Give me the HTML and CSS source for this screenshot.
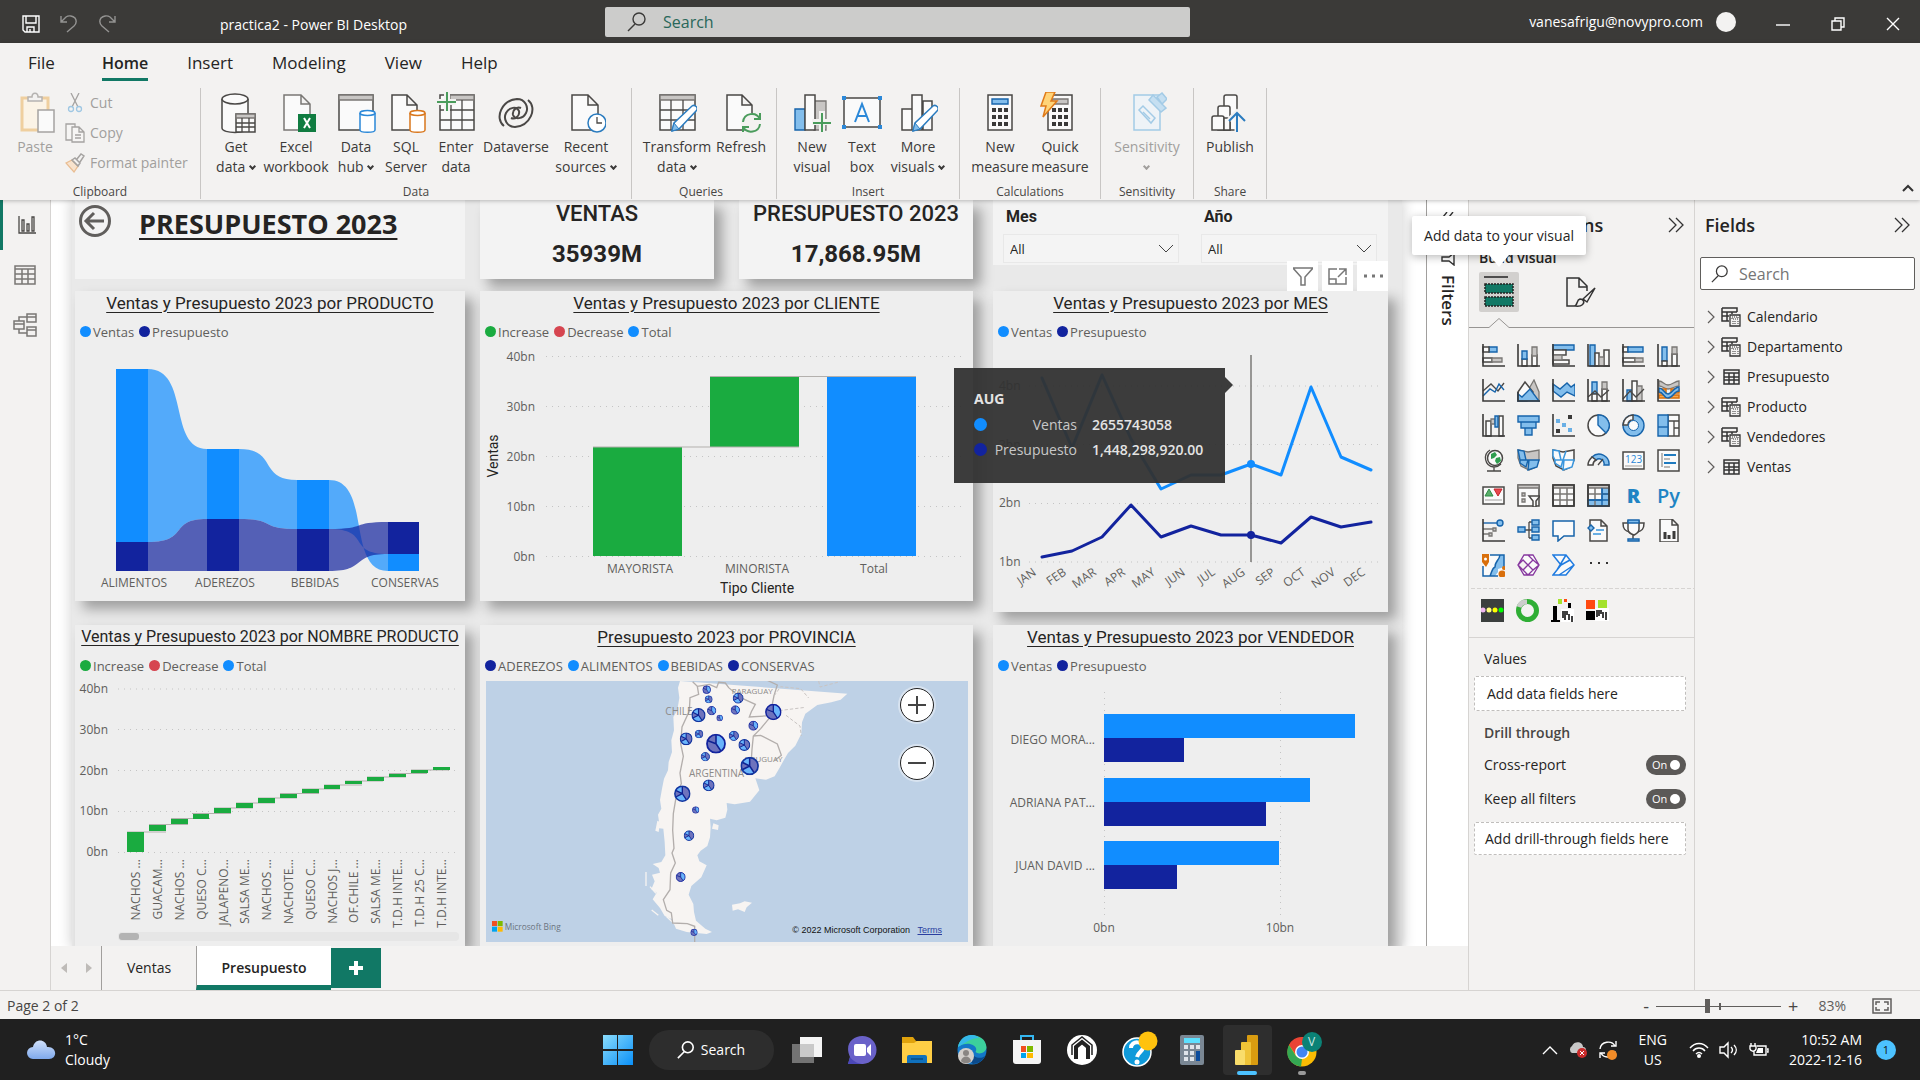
FILE: index.html
```html
<!DOCTYPE html>
<html lang="en">
<head>
    <meta charset="UTF-8">
    <meta name="viewport" content="width=device-width, initial-scale=1.0">
    <title>practica2 - Power BI Desktop</title>
    <link rel="stylesheet" href="styles.css">
</head>
<body>
    <header class="titlebar">
        <div class="quick">
            <button aria-label="Save"><svg width="18" height="18" viewBox="0 0 18 18"><path class="wl" d="M1 1h16v16H3l-2-2zM4 1v7h10V1M5 17v-5h7v5M8 14v3"/></svg></button>
            <button class="dim" aria-label="Undo"><svg width="18" height="18" viewBox="0 0 18 18"><path class="wl" d="M1 1v6h6M1 7l5-5c3-2 7-1 9 1 2 3 1 6-1 8l-7 6"/></svg></button>
            <button class="dim" aria-label="Redo"><svg width="18" height="18" viewBox="0 0 18 18"><path class="wl" d="M17 1v6h-6M17 7l-5-5C9 0 5 1 3 3c-2 3-1 6 1 8l7 6"/></svg></button>
        </div>
        <div class="doc-name">practica2 - Power BI Desktop</div>
        <label class="top-search">
            <svg width="20" height="20" viewBox="0 0 20 20"><circle cx="12" cy="7" r="6"/><path d="M8 12l-7 7"/></svg>
            <input type="text" placeholder="Search" aria-label="Search">
        </label>
        <div class="account">
            <span>vanesafrigu@novypro.com</span>
            <i class="avatar"></i>
        </div>
        <div class="window-buttons">
            <button aria-label="Minimize"><svg width="14" height="14" viewBox="0 0 14 14"><path class="wl" d="M0 8h14"/></svg></button>
            <button aria-label="Restore"><svg width="14" height="14" viewBox="0 0 14 14"><path class="wl" d="M1 4h9v9H1zM4 4V1h9v9h-3"/></svg></button>
            <button aria-label="Close"><svg width="14" height="14" viewBox="0 0 14 14"><path class="wl" d="M1 1l12 12M13 1L1 13"/></svg></button>
        </div>
    </header>

    <section class="ribbon">
        <nav class="menu">
            <a href="#">File</a>
            <a href="#" class="active">Home</a>
            <a href="#">Insert</a>
            <a href="#">Modeling</a>
            <a href="#">View</a>
            <a href="#">Help</a>
        </nav>
        <div class="groups">
            <div class="group clipboard">
                <div class="tools">
                    <button class="tool m" disabled>
                        <svg width="40" height="42" viewBox="0 0 40 42"><path d="M7 6h26v32H7z" fill="#fbf3e6" stroke="#efcf9f" stroke-width="3"/><path d="M13 9V5h4c0-5 6-5 6 0h4v4z" fill="#f3f2f1" stroke="#b5b3b1" stroke-width="1.5"/><path d="M23 18h16v22H23z" fill="#fafafa" stroke="#a5a3a1" stroke-width="1.5"/></svg>
                        <span>Paste</span>
                    </button>
                    <div class="small-tools">
                        <button disabled><svg width="20" height="20" viewBox="0 0 20 20"><g fill="none" stroke="#a5a3a1" stroke-width="1.3"><path d="M6 0l7 14M14 0L7 14"/><circle cx="6" cy="16" r="2.5" stroke="#9fc7e3"/><circle cx="14" cy="16" r="2.5" stroke="#9fc7e3"/></g></svg>Cut</button>
                        <button disabled><svg width="20" height="20" viewBox="0 0 20 20"><g fill="#f6f5f4" stroke="#a5a3a1" stroke-width="1.3"><path d="M1 1h9v16H1z"/><path d="M7 4h7l5 5v10H7zM14 4v5h5M10 12h6M10 15h6"/></g></svg>Copy</button>
                        <button disabled><svg width="20" height="20" viewBox="0 0 20 20"><path d="M1 10l6-3 6 6-4 6z" fill="#f8e3cd" stroke="#e9bd92" stroke-width="1.3"/><path d="M7 7l3-2 5 5-2 3zM12 6l4-5 3 2-4 6" fill="none" stroke="#a5a3a1" stroke-width="1.5"/></svg>Format painter</button>
                    </div>
                </div>
                <div class="group-name">Clipboard</div>
            </div>
            <div class="group">
                <div class="tools">
                    <button class="tool m"><svg width="40" height="42" viewBox="0 0 40 42"><path class="k" d="M6 7v29c0 6 26 6 26 0V7"/><ellipse class="k" cx="19" cy="7" rx="13" ry="5"/><path class="k" d="M20 22h19v18H20z"/><path class="g" d="M20 22h19v4H20z"/><path class="kl" d="M20 31h19M20 35h19M26 26v14M33 26v14"/></svg><span>Get<br>data <b class="chev"></b></span></button>
                    <button class="tool m"><svg width="40" height="42" viewBox="0 0 40 42"><path class="g2" d="M8 3h17l9 9v26H8zM25 3v9h9"/><path d="M22 22h18v18H22z" fill="#107c41"/><path d="M28 26l6 10M34 26l-6 10" stroke="#fff" stroke-width="2"/></svg><span>Excel<br>workbook</span></button>
                    <button class="tool m"><svg width="40" height="42" viewBox="0 0 40 42"><path class="k" d="M3 3h34v35H3z"/><path class="g" d="M3 3h34v5H3z"/><path class="cyl blue" d="M24 21v17c0 3 15 3 15 0V21"/><ellipse class="cyl blue" cx="31.5" cy="21" rx="7.5" ry="2.5"/></svg><span>Data<br>hub <b class="chev"></b></span></button>
                    <button class="tool s"><svg width="40" height="42" viewBox="0 0 40 42"><path class="k" d="M6 3h15l10 10v25H6zM21 3v10h10"/><path class="cyl orange" d="M24 21v17c0 3 15 3 15 0V21"/><ellipse class="cyl orange" cx="31.5" cy="21" rx="7.5" ry="2.5"/></svg><span>SQL<br>Server</span></button>
                    <button class="tool m"><svg width="40" height="42" viewBox="0 0 40 42"><path class="k" d="M4 3h34v35H4z"/><path class="g" d="M14 3h24v5H14z"/><path class="kl" d="M4 18h34M4 28h34M15 8v30M26 8v30"/><path d="M11 0v19M1 10h19" stroke="#f3f2f1" stroke-width="6"/><path d="M11 0v19M1 10h19" stroke="#4a9c5c" stroke-width="2"/></svg><span>Enter<br>data</span></button>
                    <button class="tool m"><svg width="40" height="42" viewBox="0 0 40 42"><g fill="none" stroke="#4a4846" stroke-width="2"><path d="M8 34C-2 26 6 8 21 7c8 0 12 8 9 14s-11 7-13 2c-1-5 4-9 8-7"/><path d="M32 8c10 8 2 26-13 27-8 0-12-8-9-14s11-7 13-2c1 5-4 9-8 7"/></g></svg><span>Dataverse</span></button>
                    <button class="tool l"><svg width="40" height="42" viewBox="0 0 40 42"><path class="k" d="M6 3h16l10 10v25H6zM22 3v10h10"/><circle cx="31" cy="31" r="9" fill="#fff" stroke="#2b7cbf" stroke-width="1.5"/><path class="kl" d="M31 25v6h5"/></svg><span>Recent<br>sources <b class="chev"></b></span></button>
                </div>
                <div class="group-name">Data</div>
            </div>
            <div class="group queries">
                <div class="tools">
                    <button class="tool l"><svg width="40" height="42" viewBox="0 0 40 42"><path class="k" d="M3 3h35v35H3z"/><path class="g" d="M3 3h35v5H3z"/><path class="kl" d="M3 18h35M3 28h35M14 8v30M26 8v30"/><path class="pen" d="M15 39l2-8 18-17c3-2 7 2 4 5L22 37z"/><path d="M15 39l2-8 5 6z" fill="#83beec" stroke="#2b7cbf"/></svg><span>Transform<br>data <b class="chev"></b></span></button>
                    <button class="tool sm"><svg width="40" height="42" viewBox="0 0 40 42"><path class="k" d="M6 3h15l10 10v25H6zM21 3v10h10"/><circle cx="30" cy="31" r="10" fill="#f3f2f1"/><path d="M22 30c1-9 13-11 17-3M39 21v6h-6M39 32c-1 9-13 10-17 3M22 40v-5h6" fill="none" stroke="#4a9c5c" stroke-width="2"/></svg><span>Refresh</span></button>
                </div>
                <div class="group-name">Queries</div>
            </div>
            <div class="group">
                <div class="tools">
                    <button class="tool m"><svg width="40" height="42" viewBox="0 0 40 42"><path class="g" d="M22 9h12v29H22z"/><path class="b" d="M3 17h10v21H3z"/><path class="k" d="M13 3h10v35H13z"/><path d="M30 19v21M20 30h19" stroke="#f3f2f1" stroke-width="6"/><path d="M30 21v19M21 31h18" stroke="#4a9c5c" stroke-width="2"/></svg><span>New<br>visual</span></button>
                    <button class="tool s"><svg width="40" height="42" viewBox="0 0 40 42"><path class="k" d="M2 6h36v29H2z"/><path d="M0 4h4v4H0zM36 4h4v4h-4zM0 33h4v4H0zM36 33h4v4h-4z" fill="#2b88d8"/><path d="M13 30l7-18 7 18M15 24h10" fill="none" stroke="#2b88d8" stroke-width="2"/></svg><span>Text<br>box</span></button>
                    <button class="tool ml"><svg width="40" height="42" viewBox="0 0 40 42"><path class="k" d="M25 9h9v29h-9zM4 17h10v21H4zM14 3h10v35H14z"/><path class="pen" d="M15 39l2-8 18-17c3-2 7 2 4 5L22 37z"/><path d="M15 39l2-8 5 6z" fill="#83beec" stroke="#2b7cbf"/></svg><span>More<br>visuals <b class="chev"></b></span></button>
                </div>
                <div class="group-name">Insert</div>
            </div>
            <div class="group calc">
                <div class="tools">
                    <button class="tool m"><svg width="40" height="42" viewBox="0 0 40 42"><path class="k" d="M8 3h24v35H8z"/><path class="b" d="M12 7h16v5H12z"/><path d="M14 16v18M20 16v18M26 16v18" stroke="#3b3a39" stroke-width="4" stroke-dasharray="4 3"/></svg><span>New<br>measure</span></button>
                    <button class="tool m"><svg width="40" height="42" viewBox="0 0 40 42"><path class="k" d="M8 3h24v35H8z"/><path class="g" d="M12 7h16v5H12z"/><path d="M14 16v18M20 16v18M26 16v18" stroke="#3b3a39" stroke-width="4" stroke-dasharray="4 3"/><path d="M6 0h9l-4 9h6L3 25l3-11H1z" fill="#ffd479" stroke="#e07b1a" stroke-width="1.5"/></svg><span>Quick<br>measure</span></button>
                </div>
                <div class="group-name">Calculations</div>
            </div>
            <div class="group wide">
                <div class="tools">
                    <button class="tool l" disabled><svg width="40" height="42" viewBox="0 0 40 42"><g fill="#eef3f7" stroke="#a3cbe6" stroke-width="1.5"><path d="M7 3h26v35H7z"/><path d="M12 18l4-4 12 12-4 5z"/><path d="M16 20l7 7"/><path d="M22 8l4-5 13 13-5 4zM30 5l5-4 5 6-5 5z" fill="#c5dff1"/></g></svg><span>Sensitivity<br><b class="chev"></b></span></button>
                </div>
                <div class="group-name">Sensitivity</div>
            </div>
            <div class="group wide">
                <div class="tools">
                    <button class="tool m"><svg width="40" height="42" viewBox="0 0 40 42"><path class="k" d="M14 38V5q0-2 2-2h9q2 0 2 2v33z"/><path class="k" d="M8 38V16q0-2 2-2h8q2 0 2 2v22z"/><path class="k" d="M2 38V26q0-2 2-2h8q2 0 2 2v12z"/><path class="k" d="M14 26h6v12h-6z"/><path d="M27 19v21M19 28l8-8 8 8" stroke="#f3f2f1" stroke-width="5" fill="none"/><path d="M27 21v19M19 29l8-8 8 8" stroke="#2b7cbf" stroke-width="2" fill="none"/></svg><span>Publish</span></button>
                </div>
                <div class="group-name">Share</div>
            </div>
        </div>
        <button class="collapse" aria-label="Collapse ribbon"><svg width="12" height="8" viewBox="0 0 12 8"><path d="M1 7l5-5 5 5" fill="none" stroke="#333" stroke-width="2"/></svg></button>
    </section>

    <main class="workspace">
        <nav class="views">
            <button class="selected" aria-label="Report view"><svg width="18" height="18" viewBox="0 0 18 18"><path class="kl" d="M1 0v17h17M4 4h2v11H4zM9 8h2v7H9zM14 1h2v14h-2z"/></svg></button>
            <button aria-label="Data view"><svg width="22" height="20" viewBox="0 0 22 20"><path class="gl" d="M1 1h20v18H1zM1 4h20M1 9h20M1 14h20M8 4v15M14 4v15"/></svg></button>
            <button aria-label="Model view"><svg width="24" height="24" viewBox="0 0 24 24"><path class="gl" d="M1 8h10v8H1zM1 11h10M14 1h9v8h-9zM14 4h9M14 14h9v9h-9zM14 17h9M6 8V4h8M6 16v4h8"/></svg></button>
        </nav>

        <div class="center">
            <div class="canvas">
                <div class="sheet">
                    <div class="col col-left">
                        <article class="card heading">
                            <button class="back" aria-label="Back"><svg width="32" height="32" viewBox="0 0 32 32"><circle cx="16" cy="16" r="14.5"/><path d="M25 16H7M15 8l-8 8 8 8"/></svg></button>
                            <h1>PRESUPUESTO 2023</h1>
                        </article>
                        <article class="card">
                            <h2>Ventas y Presupuesto 2023 por PRODUCTO</h2>
                            <ul class="legend"><li class="ventas">Ventas</li><li class="presu">Presupuesto</li></ul>
                            <svg class="chart" viewBox="75 342 390 259">
                                <g fill="#118dff" fill-opacity=".7">
                                    <path d="M148 369C190 369 168 449 207 449V519C168 519 190 542 148 542z"/>
                                    <path d="M239 449C278 449 258 480 297 480V529C258 529 278 519 239 519z"/>
                                    <path d="M329 480C372 480 346 571 388 571V554C346 554 372 529 329 529z"/>
                                </g>
                                <g fill="#12239e" fill-opacity=".7">
                                    <path d="M148 542C190 542 168 519 207 519V571H148z"/>
                                    <path d="M239 519C278 519 258 529 297 529V571H239z"/>
                                    <path d="M329 529C368 529 350 522 388 522V554C350 554 368 571 329 571z"/>
                                </g>
                                <g fill="#118dff">
                                    <path d="M116 369h32v173h-32zM207 449h32v70h-32zM297 480h32v49h-32zM388 554h31v17h-31z"/>
                                </g>
                                <g fill="#12239e">
                                    <path d="M116 542h32v29h-32zM207 519h32v52h-32zM297 529h32v42h-32zM388 522h31v32h-31z"/>
                                </g>
                                <g class="mid">
                                    <text x="134" y="587">ALIMENTOS</text>
                                    <text x="225" y="587">ADEREZOS</text>
                                    <text x="315" y="587">BEBIDAS</text>
                                    <text x="405" y="587">CONSERVAS</text>
                                </g>
                            </svg>
                        </article>
                        <article class="card">
                            <h2 class="long">Ventas y Presupuesto 2023 por NOMBRE PRODUCTO</h2>
                            <ul class="legend"><li class="up">Increase</li><li class="down">Decrease</li><li class="ventas">Total</li></ul>
                            <svg class="chart" viewBox="75 676 390 270">
                                <path class="dots" d="M118 689H458M118 729.5H458M118 770.5H458M118 811.5H458M118 852.5H458"/>
                                <g class="end">
                                    <text x="108" y="693">40bn</text>
                                    <text x="108" y="734">30bn</text>
                                    <text x="108" y="775">20bn</text>
                                    <text x="108" y="815">10bn</text>
                                    <text x="108" y="856">0bn</text>
                                </g>
                                <path class="link" d="M127 832h39M149 824.5h39M171 818.5h39M192 813.5h39M214 808h39M236 803h39M258 798h39M280 793.5h39M302 789h38M324 785h38M345 781h38M367 777h39M389 773.5h38M411 770h38"/>
                                <path fill="#1aab40" d="M127 832h17v20h-17zM149 825h17v6h-17zM171 819h17v5h-17zM193 814h16v5h-16zM214 808h17v5h-17zM236 803h17v5h-17zM258 798h17v5h-17zM280 794h17v4h-17zM302 789h17v4h-17zM324 785h16v4h-16zM345 781h17v3h-17zM367 777h17v4h-17zM389 774h17v3h-17zM411 770h17v3h-17zM433 767h17v3h-17z"/>
                                <g class="end">
                                    <text transform="translate(140 859) rotate(-90)">NACHOS ...</text>
                                    <text transform="translate(162 859) rotate(-90)">GUACAM...</text>
                                    <text transform="translate(184 859) rotate(-90)">NACHOS ...</text>
                                    <text transform="translate(206 859) rotate(-90)">QUESO C...</text>
                                    <text transform="translate(228 859) rotate(-90)">JALAPENO...</text>
                                    <text transform="translate(249 859) rotate(-90)">SALSA ME...</text>
                                    <text transform="translate(271 859) rotate(-90)">NACHOS ...</text>
                                    <text transform="translate(293 859) rotate(-90)">NACHOTE...</text>
                                    <text transform="translate(315 859) rotate(-90)">QUESO C...</text>
                                    <text transform="translate(337 859) rotate(-90)">NACHOS J...</text>
                                    <text transform="translate(358 859) rotate(-90)">OF.CHILE ...</text>
                                    <text transform="translate(380 859) rotate(-90)">SALSA ME...</text>
                                    <text transform="translate(402 859) rotate(-90)">T.D.H INTE...</text>
                                    <text transform="translate(424 859) rotate(-90)">T.D.H 25 C...</text>
                                    <text transform="translate(446 859) rotate(-90)">T.D.H INTE...</text>
                                </g>
                                <rect x="118" y="932" width="341" height="9" rx="4" fill="#e6e6e6"/>
                                <rect x="119" y="933" width="20" height="7" rx="3" fill="#b3b3b3"/>
                            </svg>
                        </article>
                    </div>

                    <div class="col col-mid">
                        <div class="kpis">
                            <article class="card kpi"><h3>VENTAS</h3><p>35939M</p></article>
                            <article class="card kpi"><h3>PRESUPUESTO 2023</h3><p>17,868.95M</p></article>
                        </div>
                        <article class="card">
                            <h2>Ventas y Presupuesto 2023 por CLIENTE</h2>
                            <ul class="legend"><li class="up">Increase</li><li class="down">Decrease</li><li class="ventas">Total</li></ul>
                            <svg class="chart" viewBox="480 342 493 259">
                                <path class="dots" d="M546 356.5H965M546 406.5H965M546 456.5H965M546 506.5H965M546 556.5H965"/>
                                <g class="end">
                                    <text x="535" y="361">40bn</text>
                                    <text x="535" y="411">30bn</text>
                                    <text x="535" y="461">20bn</text>
                                    <text x="535" y="511">10bn</text>
                                    <text x="535" y="561">0bn</text>
                                </g>
                                <path fill="#1aab40" d="M593 447h89v109h-89zM710 377h89v70h-89z"/>
                                <path fill="#118dff" d="M827 377h89v179h-89z"/>
                                <path class="link" d="M593 447h206M710 376.5h206"/>
                                <g class="mid">
                                    <text x="640" y="573">MAYORISTA</text>
                                    <text x="757" y="573">MINORISTA</text>
                                    <text x="874" y="573">Total</text>
                                    <text class="axis" x="757" y="593">Tipo Cliente</text>
                                    <text class="axis" transform="translate(498 456) rotate(-90)">Ventas</text>
                                </g>
                            </svg>
                        </article>
                        <article class="card">
                            <h2>Presupuesto 2023 por PROVINCIA</h2>
                            <ul class="legend"><li class="presu">ADEREZOS</li><li class="ventas">ALIMENTOS</li><li class="ventas">BEBIDAS</li><li class="presu">CONSERVAS</li></ul>
                            <div class="map">
                                <svg viewBox="48 213 1446 783">
                                    <defs>
                                        <symbol id="pie" viewBox="-10 -10 20 20">
                                            <circle r="9" fill="#69b4fb"/>
                                            <path d="M0 0V-9A9 9 0 0 1 5 7.5zM0 0L-8 4A9 9 0 0 1 -8 -4z" fill="#6e73bd"/>
                                            <path d="M0 -9V0L5 7.5M0 0L-8 4M0 0L-8 -4" fill="none" stroke="#0f2392" stroke-width="1.6"/>
                                            <circle r="9" fill="none" stroke="#12349f" stroke-width="1.8"/>
                                        </symbol>
                                        <symbol id="pie-dark" viewBox="-10 -10 20 20">
                                            <circle r="9" fill="#6e73bd"/>
                                            <path d="M0 0V-9A9 9 0 0 1 5 7.5z" fill="#69b4fb"/>
                                            <path d="M0 -9V0L5 7.5M0 0L-8 -3" fill="none" stroke="#0f2392" stroke-width="1.6"/>
                                            <circle r="9" fill="none" stroke="#12239e" stroke-width="1.8"/>
                                        </symbol>
                                    </defs>
                                    <path fill="#bed1e6" d="M48 213h1446v783H48z"/>
                                    <g fill="#f7f4f2">
                                        <path d="M630 213l-6 20 4 30-6 38-12 20 2 40-8 30 2 35-10 30-2 25-12 25-6 30-6 34 4 26-10 18 4 28-6 12 18 2 4 40 2 40-12 20-26 6 18 12 4 14-24 6 8 20-10 24 16 10-12 20 22 26 14 24 22 10 12 28 32 10 60 6 16-6-20-10-28-24-6-26-2-24-14-28 8-26 30-26 16-36-22-12-6-18 10-14 20-14 8-26 2-30-2-26 20 5 26-8 6-24-2-20 24 4 46-8 28-34-8-24-4-12 32 4 26-10 14-24 12-22 14-24 22-22 18-36 2-34 10-26 36-26 42-8 28-8 20-18z"/>
                                        <path d="M730 640l16 6-2 14-18-4zM562 632l8 4-4 30-10-4zM786 884l24-4 14-6 22 4-16 14-6 14-20-8-16 4z"/>
                                        <path d="M528 786v42M540 830l18 20M545 900l20 16M590 920l24 22" stroke="#f7f4f2" stroke-width="4"/>
                                    </g>
                                    <g fill="none" stroke="#b3aeac" stroke-width="4">
                                        <path d="M668 215l14 14 4 24-26 10-2 40-22 48-4 50 8 38-10 50 4 32-14 30-10 60-2 50 4 54-6 14 10 30-14 30-2 50-20 30 10 32 14 8 4 30 44 2 22 8v70l24 12"/>
                                        <path d="M682 229l36-6 22 10 6-16 20 2 10 14 36 30 44 20-12 22-6 16 62-4 12-60 10-32-30-14-42-2"/>
                                        <path d="M900 322l-28 34-22 22-4 40-2 30 18 20M850 378l22-2 50 26 12 34-18 14"/>
                                    </g>
                                    <path d="M912 258l20-28 60 6 24 28M912 304l30-4 64-8M948 316l42 32 4 30M1046 213l4 18 60-16" fill="none" stroke="#c9c4c2" stroke-width="3" stroke-dasharray="10 6"/>
                                    <g class="country">
                                        <text x="785" y="251" font-size="24">PARAGUAY</text>
                                        <text x="586" y="315" font-size="30">CHILE</text>
                                        <text x="824" y="455" font-size="24">URUGUAY</text>
                                        <text x="657" y="502" font-size="30">ARGENTINA</text>
                                    </g>
                                    <use href="#pie-dark" x="697" y="226" width="26" height="26"/>
                                    <use href="#pie" x="704" y="256" width="24" height="24"/>
                                    <use href="#pie" x="788" y="248" width="33" height="33"/>
                                    <use href="#pie-dark" x="782" y="286" width="28" height="28"/>
                                    <use href="#pie-dark" x="711" y="288" width="28" height="28"/>
                                    <use href="#pie" x="664" y="294" width="43" height="43"/>
                                    <use href="#pie-dark" x="739" y="314" width="20" height="20"/>
                                    <use href="#pie-dark" x="885" y="281" width="50" height="50"/>
                                    <use href="#pie-dark" x="835" y="332" width="30" height="30"/>
                                    <use href="#pie" x="674" y="359" width="26" height="26"/>
                                    <use href="#pie" x="629" y="367" width="39" height="39"/>
                                    <use href="#pie-dark" x="708" y="371" width="60" height="60"/>
                                    <use href="#pie" x="776" y="362" width="31" height="31"/>
                                    <use href="#pie" x="805" y="387" width="36" height="36"/>
                                    <use href="#pie" x="692" y="426" width="28" height="28"/>
                                    <use href="#pie" x="811" y="440" width="56" height="56"/>
                                    <use href="#pie" x="698" y="508" width="36" height="36"/>
                                    <use href="#pie" x="612" y="526" width="50" height="50"/>
                                    <use href="#pie-dark" x="666" y="589" width="22" height="22"/>
                                    <use href="#pie" x="641" y="661" width="32" height="32"/>
                                    <use href="#pie-dark" x="617" y="786" width="30" height="30"/>
                                    <use href="#pie-dark" x="661" y="956" width="22" height="22"/>
                                    <path fill="#f25022" d="M66 933h15v15H66z"/><path fill="#7fba00" d="M83 933h15v15H83z"/><path fill="#00a4ef" d="M66 950h15v15H66z"/><path fill="#ffb900" d="M83 950h15v15H83z"/>
                                    <text x="104" y="959" font-size="25" fill="#6b7480">Microsoft Bing</text>
                                </svg>
                                <div class="map-zoom">
                                    <button aria-label="Zoom in"><svg width="18" height="18" viewBox="0 0 18 18"><path d="M0 9h18M9 0v18"/></svg></button>
                                    <button aria-label="Zoom out"><svg width="18" height="18" viewBox="0 0 18 18"><path d="M0 9h18"/></svg></button>
                                </div>
                                <div class="copyright">© 2022 Microsoft Corporation <a href="#">Terms</a></div>
                            </div>
                        </article>
                    </div>

                    <div class="col col-right">
                        <article class="card slicers">
                            <div class="slicer">
                                <label for="mes">Mes</label>
                                <div class="select"><select id="mes"><option>All</option></select><svg width="14" height="9" viewBox="0 0 14 9"><path d="M0 1l7 7 7-7"/></svg></div>
                            </div>
                            <div class="slicer">
                                <label for="anio">Año</label>
                                <div class="select"><select id="anio"><option>All</option></select><svg width="14" height="9" viewBox="0 0 14 9"><path d="M0 1l7 7 7-7"/></svg></div>
                            </div>
                        </article>
                        <article class="card lines">
                            <div class="visual-header">
                                <button aria-label="Filters"><svg width="20" height="19" viewBox="0 0 20 19"><path d="M0 1h20l-8 9v8H8v-8z"/></svg></button>
                                <button aria-label="Focus mode"><svg width="19" height="17" viewBox="0 0 19 17"><path d="M9 1H1v15h17V9M1 11h7v5M11 1h7v6M18 1l-8 8"/></svg></button>
                                <button aria-label="More options"><svg width="20" height="4" viewBox="0 0 20 4"><path d="M1 2h3M9 2h3M17 2h3" stroke-width="3"/></svg></button>
                            </div>
                            <h2>Ventas y Presupuesto 2023 por MES</h2>
                            <ul class="legend"><li class="ventas">Ventas</li><li class="presu">Presupuesto</li></ul>
                            <svg class="chart" viewBox="993 342 395 270">
                                <path class="dots" d="M1029 386H1380M1029 444.5H1380M1029 503.5H1380M1029 562H1380"/>
                                <text x="999" y="390">4bn</text>
                                <text x="999" y="449">3bn</text>
                                <text x="999" y="507">2bn</text>
                                <text x="999" y="566">1bn</text>
                                <path d="M1251 355V562" stroke="#7a7876" stroke-width="1.5"/>
                                <g fill="none" stroke-width="3" stroke-linejoin="round" stroke-linecap="round">
                                    <path stroke="#118dff" d="M1042 378L1072 448L1102 375L1131 439L1161 489L1191 475H1221L1251 464L1281 475L1311 387L1341 457L1371 470"/>
                                    <path stroke="#12239e" d="M1042 557L1072 551L1102 537L1131 505L1161 537L1191 526L1221 535H1251L1281 543L1311 517L1341 527L1371 522"/>
                                </g>
                                <circle cx="1251" cy="464" r="4" fill="#118dff"/>
                                <circle cx="1251" cy="535" r="4" fill="#12239e"/>
                                <g class="end">
                                    <text transform="translate(1037 574) rotate(-35)">JAN</text>
                                    <text transform="translate(1067 574) rotate(-35)">FEB</text>
                                    <text transform="translate(1097 574) rotate(-35)">MAR</text>
                                    <text transform="translate(1126 574) rotate(-35)">APR</text>
                                    <text transform="translate(1156 574) rotate(-35)">MAY</text>
                                    <text transform="translate(1186 574) rotate(-35)">JUN</text>
                                    <text transform="translate(1216 574) rotate(-35)">JUL</text>
                                    <text transform="translate(1246 574) rotate(-35)">AUG</text>
                                    <text transform="translate(1276 574) rotate(-35)">SEP</text>
                                    <text transform="translate(1306 574) rotate(-35)">OCT</text>
                                    <text transform="translate(1336 574) rotate(-35)">NOV</text>
                                    <text transform="translate(1366 574) rotate(-35)">DEC</text>
                                </g>
                            </svg>
                            <div class="data-tip">
                                <strong>AUG</strong>
                                <dl>
                                    <dt class="ventas">Ventas</dt><dd>2655743058</dd>
                                    <dt class="presu">Presupuesto</dt><dd>1,448,298,920.00</dd>
                                </dl>
                            </div>
                        </article>
                        <article class="card">
                            <h2>Ventas y Presupuesto 2023 por VENDEDOR</h2>
                            <ul class="legend"><li class="ventas">Ventas</li><li class="presu">Presupuesto</li></ul>
                            <svg class="chart" viewBox="993 676 395 270">
                                <path class="dots" d="M1104.5 692V918M1280.5 692V918"/>
                                <path fill="#118dff" d="M1104 714h251v24h-251zM1104 778h206v24h-206zM1104 841h175v24h-175z"/>
                                <path fill="#12239e" d="M1104 738h80v24h-80zM1104 802h162v24h-162zM1104 865h73v24h-73z"/>
                                <g class="end">
                                    <text x="1095" y="744">DIEGO MORA...</text>
                                    <text x="1095" y="807">ADRIANA PAT...</text>
                                    <text x="1095" y="870">JUAN DAVID ...</text>
                                </g>
                                <g class="mid">
                                    <text x="1104" y="932">0bn</text>
                                    <text x="1280" y="932">10bn</text>
                                </g>
                            </svg>
                        </article>
                    </div>
                </div>
                <aside class="filters">
                    <svg width="12" height="10" viewBox="0 0 12 10"><path d="M5 0L1 5l4 5M11 0L7 5l4 5"/></svg>
                    <svg class="funnel" width="14" height="14" viewBox="0 0 14 14"><path d="M13 1v12L8 9H1V5h7z"/></svg>
                    <span>Filters</span>
                </aside>
            </div>
            <nav class="pages">
                <button class="arrow" aria-label="Previous page"><svg width="6" height="10" viewBox="0 0 6 10"><path d="M6 0v10L0 5z"/></svg></button>
                <button class="arrow" aria-label="Next page"><svg width="6" height="10" viewBox="0 0 6 10"><path d="M0 0v10l6-5z"/></svg></button>
                <button class="page">Ventas</button>
                <button class="page current">Presupuesto</button>
                <button class="add" aria-label="New page"><svg width="14" height="14" viewBox="0 0 14 14"><path d="M0 7h14M7 0v14" stroke="#fff" stroke-width="4"/></svg></button>
            </nav>
        </div>

        <aside class="viz">
            <div class="pane-head"><h2>Visualizations</h2><svg width="16" height="16" viewBox="0 0 16 16"><path d="M1 1l7 7-7 7M8 1l7 7-7 7"/></svg></div>
            <p class="build">Build visual</p>
            <div class="modes">
                <button class="on" aria-label="Build visual"><svg width="30" height="32" viewBox="0 0 30 32"><path d="M0 1h24" stroke="#222" stroke-width="1.5"/><path d="M1 8h28v9H1zM1 21h28v9H1z" fill="#117865" stroke="#222" stroke-width="1.5" stroke-dasharray="2 1"/></svg></button>
                <button aria-label="Format visual"><svg width="30" height="32" viewBox="0 0 30 32"><path d="M8 30H1V2h12l8 8v5M13 2v9h8" fill="none" stroke="#333" stroke-width="1.5"/><path d="M8 30c4 0 2-6 6-7 4 0 5 4 2 6-2 2-6 1-8 1zM17 23L29 12l-8 14z" fill="#f3f2f1" stroke="#333" stroke-width="1.5"/></svg></button>
            </div>
            <svg class="notch" width="226" height="12" viewBox="0 0 226 12"><path d="M0 10.5h20l10-9 10 9h186"/></svg>
            <div class="icons">
                <button aria-label="Stacked bar chart"><svg viewBox="0 0 23 23"><path class="b" d="M7 3h8v5H7z"/><path class="k" d="M1 3h6v5H1zM1 14h9v4H1z"/><path class="g" d="M10 14h10v4H10z"/><path class="ax" d="M1 0v22h22"/></svg></button>
                <button aria-label="Stacked column chart"><svg viewBox="0 0 23 23"><path class="k" d="M5 15h5v7H5zM15 11h5v11h-5z"/><path class="b" d="M5 7h5v8H5z"/><path class="g" d="M15 3h5v9h-5z"/><path class="ax" d="M1 0v22h22"/></svg></button>
                <button aria-label="Clustered bar chart"><svg viewBox="0 0 23 23"><path class="b" d="M1 1h21v5H1z"/><path class="k" d="M1 6h13v5H1zM1 16h16v4H1z"/><path class="g" d="M1 11h9v5H1z"/><path class="ax" d="M1 0v22h22"/></svg></button>
                <button aria-label="Clustered column chart"><svg viewBox="0 0 23 23"><path class="b" d="M3 1h5v21H3z"/><path class="k" d="M8 9h4v13H8zM17 6h5v16h-5z"/><path class="g" d="M12 13h5v9h-5z"/><path class="ax" d="M1 0v22h22"/></svg></button>
                <button aria-label="100% stacked bar chart"><svg viewBox="0 0 23 23"><path class="k" d="M1 3h5v5H1zM1 14h12v4H1z"/><path class="b" d="M6 3h15v5H6z"/><path class="g" d="M13 14h8v4h-8z"/><path class="ax" d="M1 0v22h22"/></svg></button>
                <button aria-label="100% stacked column chart"><svg viewBox="0 0 23 23"><path class="b" d="M5 3h5v14H5z"/><path class="k" d="M5 17h5v5H5zM15 10h5v12h-5z"/><path class="g" d="M15 3h5v7h-5z"/><path class="ax" d="M1 0v22h22"/></svg></button>

                <button aria-label="Line chart"><svg viewBox="0 0 23 23"><path class="kl" d="M1 12l8-7 7 7 6-8"/><path class="bl" d="M1 17l7-7 5 3 4-8 5 6"/><path class="ax" d="M1 0v22h22"/></svg></button>
                <button aria-label="Area chart"><svg viewBox="0 0 23 23"><path class="g" d="M10 13l7-12 5 12v9z"/><path class="k" d="M1 13L8 3l8 10-6 9H1z"/><path class="b" d="M1 22V15l4 3 8-8 9 12z"/><path class="ax" d="M1 13v9h22"/></svg></button>
                <button aria-label="Stacked area chart"><svg viewBox="0 0 23 23"><path class="b" d="M1 5l7 5 7-6 4 4 4-3v12l-8-4-6 5-8-6z"/><path class="ax" d="M1 0v22h22"/></svg></button>
                <button aria-label="Line and stacked column chart"><svg viewBox="0 0 23 23"><path class="b" d="M5 3h5v12H5z"/><path class="k" d="M5 15h5v7H5zM15 10h5v12h-5z"/><path class="g" d="M15 3h5v7h-5z"/><path class="kl" d="M1 18l7-6 6 6 8-7"/><path class="ax" d="M1 0v22h22"/></svg></button>
                <button aria-label="Line and clustered column chart"><svg viewBox="0 0 23 23"><path class="b" d="M5 11h5v11H5z"/><path class="k" d="M10 2h5v20h-5z"/><path class="g" d="M15 7h5v15h-5z"/><path class="kl" d="M1 20l7-8 6 6 8-8"/><path class="ax" d="M1 0v22h22"/></svg></button>
                <button aria-label="Ribbon chart"><svg viewBox="0 0 23 23"><path class="g" d="M2 2c4 0 5 4 9 4s7-4 11-4v5c-4 0-7 3-11 3S6 7 2 7z"/><path d="M2 10h7v4H2zM14 10h8v4h-8zM2 16h20v3H2z" fill="#f7a84f" stroke="#d96f0b" stroke-width="1.5"/><path class="b" d="M2 9c5 0 5 6 9 6s6-7 11-7v4c-5 0-6 7-11 7S7 13 2 13z"/><path class="ax" d="M1 0v22h22"/></svg></button>

                <button aria-label="Waterfall chart"><svg viewBox="0 0 23 23"><path class="k" d="M4 7h5v15H4zM17 2h4v20h-4z"/><path class="g" d="M9 5h4v5H9z"/><path class="b" d="M13 2h3v11h-3z"/><path class="ax" d="M1 0v22h22"/></svg></button>
                <button aria-label="Funnel"><svg viewBox="0 0 23 23"><path class="b" d="M1 2h21v6H1zM4 8h15v6H4zM8 14h7v7H8z"/></svg></button>
                <button aria-label="Scatter chart"><svg viewBox="0 0 23 23"><path d="M4 5h4v4H4zM10 9h4v4h-4zM16 14h4v4h-4z" fill="#69afe5"/><path d="M16 1h4v4h-4zM4 15h4v4H4z" fill="#3b3a39"/><path class="ax" d="M1 0v22h22"/></svg></button>
                <button aria-label="Pie chart"><svg viewBox="0 0 23 23"><circle class="k" cx="11.5" cy="11.5" r="10.5"/><path class="b" d="M11 11V1a10.5 10.5 0 0 1 8 18z"/></svg></button>
                <button aria-label="Donut chart"><svg viewBox="0 0 23 23"><circle class="b" cx="11.5" cy="11.5" r="10.5"/><path class="k" d="M11 1A10.5 10.5 0 0 0 1 11h5c0-3 2-5 5-5z"/><circle cx="11.5" cy="11.5" r="5" fill="#fafafa" stroke="#1764ab"/></svg></button>
                <button aria-label="Treemap"><svg viewBox="0 0 23 23"><path class="k" d="M11 1h11v21H11z"/><path class="kl" d="M11 7h11M17 7v15M17 14h5"/><path class="b" d="M1 1h10v21H1z"/><path class="bl" d="M1 13h10"/></svg></button>

                <button aria-label="Map"><svg viewBox="0 0 23 23"><circle class="k" cx="13" cy="9" r="7.5"/><path d="M9 5l4-2 2 3-3 3-3 1zM14 9l4-1 1 4-4 3-2-3z" fill="#2f9e4f"/><path class="kl" d="M8 1C1 5 2 17 12 18c3 0 5-1 7-3M12 18v4M5 22h14"/></svg></button>
                <button aria-label="Filled map"><svg viewBox="0 0 23 23"><path class="g" d="M1 1l10 2 11-2v10l-3 7-7 3-8-4-3-8z"/><path class="b" d="M1 1l6 1 2 9H3zM12 11h10l-2 7-9 3zM3 11h8l-2 7-6-4z"/></svg></button>
                <button aria-label="Shape map"><svg viewBox="0 0 23 23"><path class="k" d="M1 1l10 2 11-2v10l-3 7-7 3-8-4-3-8z"/><path d="M1 1l6 1 2 9H3l-2-4zM12 11h10l-2 7-9 3zM3 11h8l-2 7-6-4zM14 2l-3 9" fill="#fafafa" stroke="#3a96dd" stroke-width="1.5"/></svg></button>
                <button aria-label="Gauge"><svg viewBox="0 0 23 23"><path class="b" d="M5 8a10 10 0 0 1 17 8h-5a5 5 0 0 0-8-5z"/><path class="k" d="M1 16c0-4 2-6 4-8l4 3c-2 1-3 3-3 5z"/><path class="kl" d="M11 16l5-6" stroke-width="2"/></svg></button>
                <button aria-label="Card"><svg viewBox="0 0 23 23"><path class="k" d="M1 3h21v17H1z"/><path d="M3 17h17" stroke="#a19f9d"/><text x="3" y="14" font-size="10" fill="#2b88d8">123</text></svg></button>
                <button aria-label="Multi-row card"><svg viewBox="0 0 23 23"><path class="k" d="M1 1h21v21H1z"/><path d="M5 4v14M7 10h6M7 18h6" stroke="#797774"/><path d="M7 6h12M7 14h12" stroke="#1f7bc0" stroke-width="2"/></svg></button>

                <button aria-label="KPI"><svg viewBox="0 0 23 23"><path class="k" d="M1 3h21v17H1z"/><path d="M3 12l4-7 4 7z" fill="#5aaf6b" stroke="#2d8a43"/><path d="M12 5h8l-4 7z" fill="#e8484c" stroke="#c4262e"/><path d="M3 16h17" stroke="#a19f9d"/></svg></button>
                <button aria-label="Slicer"><svg viewBox="0 0 23 23"><path class="k" d="M1 1h21v21H1z"/><path class="g" d="M1 1h21v3H1zM5 9h3v3H5zM5 15h3v3H5z"/><path class="k" d="M12 12h11l-4 5v6h-3v-6z"/></svg></button>
                <button aria-label="Table"><svg viewBox="0 0 23 23"><path class="k" d="M1 1h21v21H1z"/><path class="g" d="M1 1h21v3H1z"/><path class="gl" d="M1 10h21M1 16h21M8 4v18M15 4v18"/><path class="ax" d="M1 1h21v21H1z"/></svg></button>
                <button aria-label="Matrix"><svg viewBox="0 0 23 23"><path class="k" d="M1 1h21v21H1z"/><path class="b" d="M15 4h7v18H1v-6h14z"/><path class="g" d="M1 1h21v3H1z"/><path class="gl" d="M1 10h21M8 4v18"/><path class="bl" d="M15 4v18M1 16h21M15 10h7"/><path class="ax" d="M1 1h21v21H1z"/></svg></button>
                <button class="word" aria-label="R script visual"><b>R</b></button>
                <button class="word" aria-label="Python visual">Py</button>

                <button aria-label="Key influencers"><svg viewBox="0 0 23 23"><path class="bl" d="M1 4h15"/><circle class="b" cx="18" cy="4" r="3"/><path d="M1 10h10M1 15h6" stroke="#797774" stroke-width="1.5"/><path class="g" d="M11 9h3v3h-3zM7 14h3v3H7z"/><path class="ax" d="M1 0v22h22"/></svg></button>
                <button aria-label="Decomposition tree"><svg viewBox="0 0 23 23"><path class="kl" d="M8 11h7M12 3v16M12 3h4M12 19h4"/><path class="b" d="M1 8h7v5H1zM15 1h7v5h-7zM15 8h7v5h-7zM15 16h7v5h-7z"/></svg></button>
                <button aria-label="Q&amp;A"><svg viewBox="0 0 23 23"><path d="M1 2h21v15H12l-6 5v-5H1z" fill="#fafafa" stroke="#1764ab" stroke-width="1.5"/></svg></button>
                <button aria-label="Smart narrative"><svg viewBox="0 0 23 23"><path class="k" d="M3 1h11l6 6v15H3zM14 1v6h6"/><path class="b" d="M1 9l3-3 3 3-3 3z"/><path d="M9 11h8M6 15h8" stroke="#3a96dd" stroke-width="1.5"/></svg></button>
                <button aria-label="Goals"><svg viewBox="0 0 23 23"><path class="k" d="M6 4H1c0 6 2 8 7 9M17 4h5c0 6-2 8-7 9"/><path class="k" d="M6 2h11v8c0 4-3 5-5 6-3-1-6-2-6-6zM11 16v4"/><path class="b" d="M6 1h11v3H6zM6 20h11v2H6z"/></svg></button>
                <button aria-label="Paginated report"><svg viewBox="0 0 23 23"><path class="k" d="M3 0h12l6 6v17H3zM15 0v6h6"/><path d="M8 20v-7M12 20v-4M17 20v-8" stroke="#3b3a39" stroke-width="3"/></svg></button>

                <button aria-label="ArcGIS map"><svg viewBox="0 0 23 23"><path d="M8 1h14v12l-6 9H1V10z" fill="#fafafa"/><path d="M17 1h5v12l-6 2v3l-3 4H8c2-4 2-8 5-9 0-5 1-7 4-8z" fill="#83beec"/><path d="M8 1h14v12M1 12v10h15M8 22c2-4 2-8 5-9 0-6 4-6 5-12" fill="none" stroke="#1764ab" stroke-width="1.5"/><path d="M0 0h7v8l-3 5-4-5z" fill="#d96f0b"/><circle cx="3.500" cy="5" r="1.500" fill="#fff"/><circle cx="20" cy="20" r="3.500" fill="#d96f0b"/><circle cx="22" cy="14" r="2" fill="#d96f0b"/></svg></button>
                <button aria-label="Power Apps"><svg viewBox="0 0 23 23"><path d="M7 1h9l6 10-6 10H7L1 11zM11 1l5 5-5 5-5-5M11 11l5 5-5 5-5-5zM11 11L6 6l-5 5 5 5zM16 6l6 5-6 5-5-5z" fill="#fafafa" stroke="#86379e" stroke-width="1.3"/></svg></button>
                <button aria-label="Power Automate"><svg viewBox="0 0 23 23"><path d="M1 1h13l8 10-8 10H1l8-10zM9 11L18 6M5 16L14 1M7 21L22 11" fill="#fafafa" stroke="#1f7be0" stroke-width="1.5"/></svg></button>
                <button aria-label="Get more visuals"><svg viewBox="0 0 23 23"><path d="M3 9h2M11 9h2M19 9h2" stroke="#333" stroke-width="2"/></svg></button>
            </div>
            <div class="icons custom">
                <button aria-label="Custom visual 1"><svg viewBox="0 0 23 23"><path fill="#3b3f3e" d="M0 0h23v23H0z"/><circle cx="2" cy="11" r="2.5" fill="#f0b8f0"/><circle cx="8" cy="11" r="2.5" fill="#ffff80"/><circle cx="14" cy="11" r="2.5" fill="#ff0"/><circle cx="20" cy="11" r="2.5" fill="#0f0"/></svg></button>
                <button aria-label="Custom visual 2"><svg viewBox="0 0 23 23"><circle cx="11.5" cy="11.5" r="9" fill="none" stroke="#2fae35" stroke-width="5"/><path d="M3 8c1-3 4-5 8-5" fill="none" stroke="#ccc" stroke-width="5"/></svg></button>
                <button aria-label="Custom visual 3"><svg viewBox="0 0 23 23"><path d="M2 7h4v15H2zM0 21h9v2H0zM17 4h3v5h-3z"/><path fill="#a4e22c" d="M7 0h4v5H7z"/><path fill="#ff4a11" d="M13 0h3v3h-3z"/><path fill="#fff" d="M10 10h14v13H10z"/><path d="M12 12v7M14 12v9M16 12v4M18 15v6M21 17v6" stroke="#000" stroke-width="1.5"/></svg></button>
                <button aria-label="Custom visual 4"><svg viewBox="0 0 23 23"><path fill="#ff4a11" d="M0 1h9v9H0z"/><path fill="#a4e22c" d="M12 1h9v9h-9z"/><path d="M0 12h9v9H0z"/><path fill="#fff" d="M9 9h14v13H9z"/><path d="M11 11v7M13 11v6M15 11v4M17 13v6M20 13v8" stroke="#000" stroke-width="1.5"/></svg></button>
            </div>
            <div class="wells">
                <p>Values</p>
                <div class="well">Add data fields here</div>
                <p class="strong">Drill through</p>
                <label class="switch">Cross-report <input type="checkbox" checked><i>On</i></label>
                <label class="switch">Keep all filters <input type="checkbox" checked><i>On</i></label>
                <div class="well low">Add drill-through fields here</div>
            </div>
            <div class="hint" role="tooltip">Add data to your visual</div>
        </aside>

        <aside class="fields">
            <div class="pane-head"><h2>Fields</h2><svg width="16" height="16" viewBox="0 0 16 16"><path d="M1 1l7 7-7 7M8 1l7 7-7 7"/></svg></div>
            <label class="field-search">
                <svg width="18" height="18" viewBox="0 0 20 20"><circle cx="12" cy="7" r="6"/><path d="M8 12l-7 7"/></svg>
                <input type="text" placeholder="Search" aria-label="Search fields">
            </label>
            <svg class="defs" width="0" height="0">
                <symbol id="arrow" viewBox="0 0 8 14"><path d="M1 1l6 6-6 6" fill="none" stroke="#605e5c" stroke-width="1.2"/></symbol>
                <symbol id="table" viewBox="0 0 20 20"><path d="M3 3h15v14H3zM3 6h15M3 10h15M3 13h15M8 6v11M13 6v11" fill="none" stroke="#333" stroke-width="1.5"/></symbol>
                <symbol id="calc" viewBox="0 0 20 20"><path d="M1 1h15v4M1 1v13h7M1 5h15M1 9h7M6 5v9M11 5v2" fill="none" stroke="#333" stroke-width="1.5"/><path d="M9 8h10v11H9z" fill="#f3f2f1" stroke="#333" stroke-width="1.3"/><path d="M11 10h6v2h-6zM12 14v4M14 14v4M17 14v4" fill="none" stroke="#333" stroke-dasharray="1 1"/></symbol>
            </svg>
            <ul class="tree">
                <li><svg width="8" height="14"><use href="#arrow"/></svg><svg width="20" height="20"><use href="#calc"/></svg>Calendario</li>
                <li><svg width="8" height="14"><use href="#arrow"/></svg><svg width="20" height="20"><use href="#calc"/></svg>Departamento</li>
                <li><svg width="8" height="14"><use href="#arrow"/></svg><svg width="20" height="20"><use href="#table"/></svg>Presupuesto</li>
                <li><svg width="8" height="14"><use href="#arrow"/></svg><svg width="20" height="20"><use href="#calc"/></svg>Producto</li>
                <li><svg width="8" height="14"><use href="#arrow"/></svg><svg width="20" height="20"><use href="#calc"/></svg>Vendedores</li>
                <li><svg width="8" height="14"><use href="#arrow"/></svg><svg width="20" height="20"><use href="#table"/></svg>Ventas</li>
            </ul>
        </aside>
    </main>

    <footer class="status">
        <span>Page 2 of 2</span>
        <div class="zoom">
            <button aria-label="Zoom out">-</button>
            <div class="range"><input type="range" min="0" max="100" value="41" aria-label="Zoom"></div>
            <button aria-label="Zoom in">+</button>
            <span class="percent">83%</span>
            <button class="fit" aria-label="Fit to page"><svg width="20" height="16" viewBox="0 0 20 16"><path d="M1 1h18v14H1zM4 7V4h4M12 4h4v3M16 9v3h-4M8 12H4V9"/></svg></button>
        </div>
    </footer>

    <div class="taskbar">
        <div class="weather">
            <svg width="30" height="20" viewBox="0 0 30 20"><defs><linearGradient id="cloud" x1="0" y1="0" x2="0" y2="1"><stop offset="0" stop-color="#cfe0fb"/><stop offset="1" stop-color="#7fa9ec"/></linearGradient></defs><path fill="url(#cloud)" d="M7 19a6 6 0 0 1 0-12C9-2 20-1 21 7c10-1 11 12 2 12z"/></svg>
            <div>1°C<br>Cloudy</div>
        </div>
        <div class="apps">
            <button aria-label="Start"><svg width="30" height="30" viewBox="0 0 30 30"><defs><linearGradient id="win" x1="0" y1="0" x2="1" y2="1"><stop offset="0" stop-color="#8adcfb"/><stop offset="1" stop-color="#0a90f8"/></linearGradient></defs><path fill="url(#win)" d="M0 0h14v14H0zM15 0h15v14H15zM0 16h14v14H0zM15 16h15v14H15z"/></svg></button>
            <button class="search-pill"><svg width="18" height="18" viewBox="0 0 20 20"><circle cx="12" cy="7" r="6"/><path d="M8 12l-7 7"/></svg>Search</button>
            <button aria-label="Task view"><svg width="30" height="30" viewBox="0 0 30 30"><path fill="#f4f4f4" d="M8 2h22v20H8z"/><path fill="#888" fill-opacity=".8" d="M0 9h22v19H0z"/><path fill="#c9c9c9" d="M8 9h14v13H8z"/></svg></button>
            <button aria-label="Chat"><svg width="30" height="30" viewBox="0 0 30 30"><path d="M1 29l2-7C-3 9 6 1 15 1a14 14 0 0 1 1 28z" fill="#6a62c9"/><path d="M1 29l2-7c2 3 6 6 12 7z" fill="#4a47b8"/><rect x="7" y="9" width="12" height="12" rx="2" fill="#fff"/><path fill="#fff" d="M20 13l4-4v12l-4-4z"/></svg></button>
            <button aria-label="File Explorer"><svg width="30" height="30" viewBox="0 0 30 30"><path fill="#e0a20c" d="M0 2h11l3 4h16v10H0z"/><path fill="#ffce45" d="M0 8h12l3-2h15v22H0z"/><path fill="#1071bd" d="M5 28v-6q0-2 2-2h16q2 0 2 2v6z"/><path d="M9 24h12" stroke="#064b83" stroke-width="1.5"/></svg></button>
            <button aria-label="Edge"><svg width="30" height="30" viewBox="0 0 30 30"><circle cx="15" cy="15" r="14.5" fill="#1377c8"/><path d="M1 12C4-4 28-3 29.5 12c0 6-8 8-11 5 4-7-9-12-17.5-5z" fill="#3ccf9c"/><path d="M1 12C4-2 18-2 22 3c-8 0-14 5-21 9z" fill="#35b8e8"/><path d="M14 17c2 5 9 8 14 4-2 5-8 8-12 8-4-3-5-8-2-12z" fill="#0b4a8b"/><circle cx="9" cy="21" r="8" fill="#d3cfcb"/><circle cx="9" cy="18" r="3" fill="#8a8683"/><path d="M4 26c1-6 9-6 10 0-2 3-8 3-10 0z" fill="#8a8683"/></svg></button>
            <button aria-label="Store"><svg width="30" height="30" viewBox="0 0 30 30"><path d="M9 6V1h12v5" fill="none" stroke="#34b7f1" stroke-width="2"/><path fill="#f5f5f5" d="M1 5h28v21q0 3-3 3H4q-3 0-3-3z"/><path fill="#f25022" d="M9 11h5v6H9z"/><path fill="#7fba00" d="M15 11h6v6h-6z"/><path fill="#00a4ef" d="M9 18h5v5H9z"/><path fill="#ffb900" d="M15 18h6v5h-6z"/></svg></button>
            <button aria-label="NovyPro"><svg width="30" height="30" viewBox="0 0 30 30"><circle cx="15" cy="15" r="15" fill="#fff"/><path d="M9 24V12l6-5 6 5v12" fill="none" stroke="#222" stroke-width="4"/><path d="M5 20V10l10-8 10 8v10" fill="none" stroke="#222" stroke-width="1.5"/></svg></button>
            <button aria-label="Help"><svg class="badged" width="30" height="36" viewBox="0 0 30 36"><circle cx="15" cy="20" r="14" fill="#0f9ada" stroke="#fff" stroke-width="1.5"/><path d="M9 16c0-8 13-7 12 0-1 4-5 4-6 9" fill="none" stroke="#fff" stroke-width="4"/><circle cx="15" cy="30" r="2.5" fill="#fff"/><circle cx="26" cy="9" r="9.5" fill="#ffc20e"/></svg></button>
            <button aria-label="Calculator"><svg width="24" height="30" viewBox="0 0 24 30"><rect width="24" height="30" rx="2" fill="#7a8794"/><path fill="#5ce0ff" d="M4 3h16v5H4z"/><path fill="#dfe4ea" d="M4 10h4v4H4zM10 10h4v4h-4zM16 10h4v4h-4zM4 16h4v4H4zM10 16h4v4h-4zM4 22h4v4H4zM10 22h4v4h-4z"/><path fill="#0c4c9c" d="M16 16h4v10h-4z"/></svg></button>
            <button class="running" aria-label="Power BI"><svg width="24" height="30" viewBox="0 0 24 30"><rect x="12" width="11" height="30" rx="1" fill="#d99c10"/><rect x="6" y="7" width="10" height="23" rx="1" fill="#efc337"/><rect y="15" width="10" height="15" rx="1" fill="#f9dd6b"/></svg></button>
            <button class="idle" aria-label="Chrome"><svg class="badged" width="30" height="36" viewBox="0 0 30 36"><circle cx="15" cy="20" r="14.5" fill="#fbbc04"/><path d="M2 13a14.5 14.5 0 0 1 26 0H15l-6 10z" fill="#ea4335"/><path d="M2 13l7 11 6 3-1 7.5A14.5 14.5 0 0 1 2 13z" fill="#34a853"/><circle cx="15" cy="20" r="7" fill="#fff"/><circle cx="15" cy="20" r="5.5" fill="#4285f4"/><circle cx="25" cy="10" r="10" fill="#0b8276"/><text x="21" y="14" font-size="12" fill="#cfe9e5">V</text></svg></button>
        </div>
        <div class="tray">
            <svg width="16" height="10" viewBox="0 0 16 10"><path class="wl" d="M1 9l7-7 7 7"/></svg>
            <svg width="20" height="18" viewBox="0 0 20 18"><path d="M4 12a4 4 0 0 1 0-7c3-6 11-4 11 1 4 0 4 6 1 6z" fill="#c8c8c8"/><circle cx="14" cy="12" r="5" fill="#c92a2a"/><path d="M12 10l4 4M16 10l-4 4" stroke="#fff"/></svg>
            <svg width="20" height="20" viewBox="0 0 20 20"><path class="wl" d="M2 9c1-8 12-9 15-3M18 1v5h-5M17 11c-2 7-11 8-14 2M2 18v-5h5"/><circle cx="14" cy="15" r="5" fill="#f28c28"/></svg>
            <div class="lang">ENG<br>US</div>
            <svg width="20" height="16" viewBox="0 0 20 16"><path class="wl" d="M1 6c5-6 13-6 18 0M4 9c3-4 9-4 12 0M7 12c2-2 4-2 6 0"/><circle cx="10" cy="14" r="2" fill="#fff"/></svg>
            <svg width="20" height="18" viewBox="0 0 20 18"><path class="wl" d="M1 6h4l4-4v14l-4-4H1zM12 6c2 2 2 4 0 6M15 4c3 3 3 7 0 10"/></svg>
            <svg width="20" height="16" viewBox="0 0 20 16"><path class="wl" d="M8 4h9v9H5v-4M18 7h1v3h-1M2 1v3M6 1v3M1 4h6v3c-1 3-5 3-6 0z"/><path fill="#fff" d="M9 6h5v5H7z"/></svg>
            <div class="clock">10:52 AM<br>2022-12-16</div>
            <i class="count">1</i>
        </div>
    </div>
</body>
</html>
```
FILE: styles.css
```css
* {
    box-sizing: border-box;
}
body {
    margin: 0;
    min-height: 100vh;
    display: flex;
    flex-direction: column;
    font-family: "Open Sans", "Noto Sans", sans-serif;
    font-size: 14px;
    line-height: 20px;
    color: #252423;
    background: #f3f2f1;
}
button {
    font: inherit;
    color: inherit;
    background: none;
    border: none;
    padding: 0;
}
h1, h2, h3, p, ul, dl, dd {
    margin: 0;
    padding: 0;
}
ul {
    list-style: none;
}
a {
    color: inherit;
    text-decoration: none;
}
i {
    font-style: normal;
}
svg {
    flex: none;
}

/* shared icon strokes */
.wl { fill: none; stroke: #fff; stroke-width: 1.4; }
.k { fill: #fafafa; stroke: #4a4846; stroke-width: 1.5; }
.kl { fill: none; stroke: #4a4846; stroke-width: 1.3; }
.g { fill: #c8c6c4; stroke: #797774; stroke-width: 1.3; }
.g2 { fill: #fafafa; stroke: #797774; stroke-width: 1.5; }
.gl { fill: none; stroke: #797774; stroke-width: 1.5; }
.b { fill: #83beec; stroke: #1764ab; stroke-width: 1.4; }
.bl { fill: none; stroke: #1764ab; stroke-width: 1.4; }
.ax { fill: none; stroke: #3b3a39; stroke-width: 1.6; }
.cyl { fill: #fff; stroke-width: 1.5; }
.blue { stroke: #2b88d8; }
.orange { stroke: #d9771c; }
.pen { fill: #fff; stroke: #2b7cbf; stroke-width: 1.5; }

/* title bar */
.titlebar {
    display: flex;
    align-items: center;
    height: 43px;
    background: #3b3a38;
    color: #fff;
}
.quick {
    display: flex;
    gap: 20px;
    padding-left: 22px;
    padding-top: 4px;
    width: 220px;
}
.quick button {
    height: 18px;
    line-height: 0;
}
.dim {
    opacity: .45;
}
.doc-name {
    flex: 385 1 0;
    padding-top: 6px;
}
.top-search {
    flex: 585 1 0;
    display: flex;
    align-items: center;
    gap: 14px;
    height: 30px;
    background: #cccccb;
    border-radius: 2px;
}
.top-search svg {
    margin-left: 22px;
}
.top-search svg, .field-search svg {
    fill: none;
    stroke: #3b3a39;
    stroke-width: 1.4;
}
.top-search input, .field-search input {
    flex: 1;
    min-width: 0;
    border: none;
    outline: none;
    background: none;
    font: inherit;
    font-size: 16px;
}
.top-search input::placeholder {
    color: #29675a;
    opacity: 1;
}
.account {
    flex: 546 1 0;
    display: flex;
    justify-content: flex-end;
    align-items: center;
    gap: 13px;
}
.avatar {
    width: 20px;
    height: 20px;
    border-radius: 50%;
    background: #f3f2f1;
}
.window-buttons {
    display: flex;
    gap: 41px;
    padding: 4px 20px 0 40px;
}
.window-buttons button {
    height: 14px;
    line-height: 0;
}

/* ribbon */
.ribbon {
    position: relative;
    z-index: 2;
    height: 157px;
    background: #f3f2f1;
    box-shadow: 0 1px 4px rgba(0, 0, 0, .25);
}
.menu {
    display: flex;
    gap: 39px;
    padding-left: 28px;
    height: 45px;
    font-size: 17px;
}
.menu a {
    height: 38px;
    line-height: 40px;
}
.menu .active {
    font-size: 16px;
    font-weight: 600;
    margin-left: 8px;
    border-bottom: 3px solid #117865;
}
.groups {
    display: flex;
    height: 111px;
}
.group {
    display: flex;
    flex-direction: column;
    justify-content: space-between;
    padding: 4px 5px 0;
    border-right: 1px solid #c8c6c4;
}
.group.queries {
    padding-right: 11px;
}
.group.calc {
    padding: 4px 10px 0;
}
.group.wide {
    padding: 4px 6px 0;
}
.tools {
    display: flex;
    justify-content: center;
}
.tool {
    display: flex;
    flex-direction: column;
    align-items: center;
    white-space: nowrap;
    color: #3b3a39;
}
.tool span {
    margin-top: 3px;
}
.tool.s { width: 40px; }
.tool.sm { width: 48px; }
.tool.m { width: 60px; }
.tool.ml { width: 72px; }
.tool.l { width: 80px; }
.tool:disabled, .small-tools button {
    color: #a19f9d;
}
.group-name {
    text-align: center;
    font-size: 12px;
    line-height: 14px;
    color: #484644;
}
.chev {
    display: inline-block;
    width: 5px;
    height: 5px;
    margin: 0 1px 3px;
    border: solid currentColor;
    border-width: 0 2px 2px 0;
    transform: rotate(45deg);
}
.clipboard {
    width: 201px;
}
.clipboard .tools {
    justify-content: flex-start;
}
.small-tools {
    display: flex;
    flex-direction: column;
    gap: 10px;
    padding-top: 1px;
}
.small-tools button {
    display: flex;
    align-items: center;
    gap: 5px;
    height: 20px;
}
.collapse {
    position: absolute;
    right: 6px;
    bottom: 8px;
    line-height: 0;
}

/* workspace */
.workspace {
    flex: 1;
    display: flex;
}
.views {
    width: 51px;
    border-right: 1px solid #d6d4d2;
}
.views button {
    display: flex;
    align-items: center;
    justify-content: center;
    width: 50px;
    height: 50px;
}
.views .selected {
    border-left: 3px solid #117865;
}
.center {
    flex: 1;
    min-width: 0;
    display: flex;
    flex-direction: column;
}
.canvas {
    flex: 1;
    display: flex;
    background: #fff;
    overflow: hidden;
}
.sheet {
    flex: 1;
    display: flex;
    margin: 0 24px 0 21px;
    padding: 0 14px 0 3px;
    background: #e9e9e9;
    box-shadow: 0 0 12px 2px rgba(0, 0, 0, .16);
}
.col {
    min-width: 0;
}
.col-left { flex: 390 1 0; }
.col-mid { flex: 493 1 0; margin: 0 20px 0 15px; }
.col-right { flex: 395 1 0; }
.card {
    position: relative;
    min-height: 310px;
    margin-bottom: 24px;
    background: #eee;
    box-shadow: 8px 8px 12px rgba(0, 0, 0, .32);
}
.card:last-child {
    min-height: 321px;
    margin-bottom: 0;
}
.card h2 {
    font: 400 17px/24px Roboto, sans-serif;
    text-align: center;
    text-decoration: underline;
    text-underline-offset: 3px;
    white-space: nowrap;
}
.card h2.long {
    font-size: 16px;
}
.card.heading, .card.slicers {
    display: flex;
    background: #f3f3f3;
    box-shadow: none;
}
.card.heading {
    min-height: 79px;
    margin-bottom: 12px;
    padding: 5px 4px;
    gap: 28px;
}
.back {
    height: 32px;
    line-height: 0;
}
.back svg {
    fill: none;
    stroke: #605e5c;
    stroke-width: 3;
}
.heading h1 {
    font-size: 27px;
    line-height: 38px;
    text-decoration: underline;
    text-underline-offset: 4px;
    text-decoration-thickness: 2px;
    white-space: nowrap;
}
.kpis {
    display: flex;
    gap: 25px;
    margin-bottom: 12px;
}
.card.kpi {
    flex: 1;
    min-height: 79px;
    margin: 0;
    background: #f3f3f3;
    font-family: Roboto, sans-serif;
    text-align: center;
    white-space: nowrap;
}
.kpi h3 {
    font-size: 22px;
    font-weight: 500;
    line-height: 28px;
}
.kpi p {
    padding-top: 12px;
    font-size: 24px;
    font-weight: 700;
    line-height: 28px;
}
.card.slicers {
    gap: 22px;
    min-height: 65px;
    margin-bottom: 26px;
    padding: 7px 11px 0 10px;
}
.slicer {
    flex: 1;
}
.slicer label {
    display: block;
    padding-left: 3px;
    font: 700 16px/20px Roboto, sans-serif;
}
.select {
    position: relative;
    margin-top: 7px;
}
.select select {
    appearance: none;
    width: 100%;
    height: 29px;
    padding: 0 6px;
    border: 1px solid #e8e8e8;
    background: #f4f4f4;
    font: inherit;
    font-size: 13px;
    color: #252423;
}
.select svg {
    position: absolute;
    right: 6px;
    top: 10px;
    fill: none;
    stroke: #444;
}
.legend {
    display: flex;
    gap: 5px;
    margin-top: 7px;
    padding-left: 5px;
    font-size: 13px;
    color: #605e5c;
}
.legend li::before {
    content: "";
    display: inline-block;
    width: 11px;
    height: 11px;
    margin-right: 2px;
    border-radius: 50%;
    background: currentColor;
}
.legend .ventas::before, .data-tip .ventas::before { background: #118dff; }
.legend .presu::before, .data-tip .presu::before { background: #12239e; }
.legend .up::before { background: #1aab40; }
.legend .down::before { background: #d64550; }

/* charts */
.chart {
    display: block;
    width: 100%;
    font-size: 12px;
    fill: #605e5c;
}
.mid { text-anchor: middle; }
.end { text-anchor: end; }
.axis {
    font: 400 14px Roboto, sans-serif;
    fill: #252423;
}
.dots {
    fill: none;
    stroke: #c4c4c4;
    stroke-dasharray: 1 5;
}
.link {
    fill: none;
    stroke: #b3b0ad;
}
.map {
    position: relative;
    margin: 5px 5px 0 6px;
}
.map > svg {
    display: block;
    width: 100%;
}
.country {
    fill: #8c8a88;
}
.map-zoom {
    position: absolute;
    top: 7px;
    right: 34px;
    display: grid;
    gap: 24px;
}
.map-zoom button {
    display: flex;
    align-items: center;
    justify-content: center;
    width: 34px;
    height: 34px;
    border: 1px solid #222;
    border-radius: 50%;
    background: #fff;
    box-shadow: 0 0 0 2px rgba(255, 255, 255, .4);
}
.map-zoom svg {
    stroke: #444;
    stroke-width: 2;
}
.copyright {
    position: absolute;
    right: 26px;
    bottom: 6px;
    font: 9px/12px "Liberation Sans", sans-serif;
    color: #111;
}
.copyright a {
    margin-left: 5px;
    color: #2b3fa0;
    text-decoration: underline;
}
.lines {
    min-height: 321px;
    margin-bottom: 13px;
}
.visual-header {
    position: absolute;
    top: -30px;
    right: 0;
    display: flex;
    gap: 4px;
}
.visual-header button {
    display: flex;
    align-items: center;
    justify-content: center;
    width: 31px;
    height: 30px;
    background: #fff;
}
.visual-header svg {
    fill: none;
    stroke: #777;
    stroke-width: 1.5;
}
.data-tip {
    position: absolute;
    left: -39px;
    top: 77px;
    z-index: 1;
    width: 271px;
    height: 115px;
    padding: 21px 20px;
    background: rgba(50, 50, 50, .95);
    color: #e4e4e4;
}
.data-tip::after {
    content: "";
    position: absolute;
    left: 100%;
    top: 9px;
    border: solid transparent;
    border-width: 8px 0 8px 8px;
    border-left-color: rgba(50, 50, 50, .95);
}
.data-tip dl {
    display: grid;
    grid-template-columns: 103px auto;
    column-gap: 15px;
    margin-top: 3px;
    line-height: 25px;
}
.data-tip dt {
    display: flex;
    align-items: center;
    justify-content: space-between;
    color: #c8c8c8;
}
.data-tip dt::before {
    content: "";
    width: 13px;
    height: 13px;
    border-radius: 50%;
}
.data-tip dd {
    font-weight: 600;
}

/* collapsed filter pane */
.filters {
    display: flex;
    flex-direction: column;
    align-items: center;
    width: 42px;
    padding-top: 12px;
    border-left: 1px solid #a19f9d;
    background: #fff;
}
.filters svg {
    fill: none;
    stroke: #333;
    stroke-width: 1.4;
}
.filters .funnel {
    margin: 30px 0 9px;
}
.filters span {
    writing-mode: vertical-rl;
    font-size: 17px;
    font-weight: 600;
}

/* page tabs */
.pages {
    display: flex;
    height: 44px;
}
.arrow {
    width: 25px;
    fill: #bebbb8;
}
.page {
    width: 95px;
    border-left: 1px solid #a19f9d;
}
.page.current {
    width: 135px;
    background: #fff;
    border-bottom: 5px solid #117865;
    padding-top: 5px;
    font-weight: 600;
}
.add {
    width: 50px;
    height: 40px;
    margin-top: 2px;
    background: #117865;
    line-height: 0;
}

/* right panes */
.viz, .fields {
    position: relative;
    width: 226px;
    border-left: 1px solid #d6d4d2;
}
.pane-head {
    display: flex;
    align-items: center;
    justify-content: space-between;
    height: 48px;
    padding: 2px 10px 0 15px;
}
.pane-head h2 {
    font-size: 18px;
    font-weight: 600;
}
.pane-head svg {
    fill: none;
    stroke: #333;
    stroke-width: 1.3;
}
.build {
    padding-left: 10px;
    font-size: 14px;
    font-weight: 600;
}
.modes {
    display: flex;
    gap: 42px;
    padding: 4px 10px 0;
}
.modes button {
    display: flex;
    align-items: center;
    justify-content: center;
    width: 40px;
    height: 40px;
    border-radius: 2px;
}
.modes .on {
    background: #d2d0ce;
}
.notch {
    display: block;
    margin-top: 5px;
    fill: none;
    stroke: #979593;
}
.icons {
    display: grid;
    grid-template-columns: repeat(6, 23px);
    grid-auto-rows: 23px;
    gap: 12px;
    margin: 0 8px;
    padding: 15px 5px 11px;
}
.icons button {
    line-height: 0;
}
.icons svg {
    width: 23px;
    height: 23px;
}
.icons .word {
    font-size: 20px;
    font-weight: 600;
    line-height: 20px;
    color: #1f84c4;
}
.custom {
    margin: 0;
    padding: 11px 13px 15px 12px;
    border-bottom: 1px solid #d6d4d2;
    background: linear-gradient(90deg, #d6d4d2 66%, transparent 0) 8px 0 / 6px 1px repeat-x;
}
.wells {
    padding: 11px 8px 0 5px;
}
.wells p {
    padding-left: 10px;
}
.strong {
    padding-top: 12px;
    font-weight: 600;
    color: #484644;
}
.well {
    margin-top: 7px;
    height: 35px;
    padding-left: 12px;
    line-height: 33px;
    border: 1px dashed #c0bebc;
    border-radius: 2px;
    background: #fff;
    white-space: nowrap;
}
.well.low {
    margin-top: 13px;
    height: 33px;
    line-height: 31px;
    padding-left: 10px;
}
.switch {
    display: flex;
    align-items: center;
    justify-content: space-between;
    height: 20px;
    margin-top: 14px;
    padding-left: 10px;
}
.wells .strong + .switch {
    margin-top: 12px;
}
.switch input {
    position: absolute;
    opacity: 0;
}
.switch i {
    display: flex;
    align-items: center;
    justify-content: space-between;
    width: 40px;
    height: 20px;
    padding: 0 6px;
    border-radius: 10px;
    background: #5b5957;
    color: #fff;
    font-size: 11px;
}
.switch i::after {
    content: "";
    width: 10px;
    height: 10px;
    border-radius: 50%;
    background: #fff;
}
.hint {
    position: absolute;
    top: 16px;
    left: -57px;
    z-index: 3;
    width: 174px;
    line-height: 39px;
    text-align: center;
    white-space: nowrap;
    font-size: 14px;
    background: #fff;
    border-radius: 2px;
    box-shadow: 0 2px 8px rgba(0, 0, 0, .28);
}
.hint::after {
    content: "";
    position: absolute;
    top: 100%;
    left: 77px;
    border: solid transparent;
    border-width: 12px 10px 0;
    border-top-color: #fff;
}
.fields .pane-head {
    padding-left: 10px;
}
.field-search {
    display: flex;
    align-items: center;
    gap: 8px;
    height: 33px;
    margin: 9px 5px 12px;
    padding-left: 10px;
    border: 1px solid #605e5c;
    border-radius: 2px;
    background: #fff;
}
.defs {
    position: absolute;
}
.tree li {
    display: flex;
    align-items: center;
    gap: 6px;
    height: 30px;
    padding-left: 12px;
}

/* status bar */
.status {
    display: flex;
    align-items: center;
    justify-content: space-between;
    height: 29px;
    padding: 2px 28px 0 7px;
    border-top: 1px solid #d6d4d2;
    color: #484644;
}
.zoom {
    display: flex;
    align-items: center;
}
.zoom button {
    font-size: 18px;
    line-height: 20px;
}
.range {
    width: 125px;
    margin: 0 7px;
    height: 20px;
    background: linear-gradient(#605e5c, #605e5c) 63px 7px / 2px 7px no-repeat;
}
.range input {
    appearance: none;
    display: block;
    width: 125px;
    height: 20px;
    margin: 0;
    background: linear-gradient(#605e5c, #605e5c) 0 10px / 125px 1px no-repeat;
}
.range input::-webkit-slider-thumb {
    appearance: none;
    width: 5px;
    height: 14px;
    background: #605e5c;
}
.percent {
    margin: 0 26px 0 20px;
    color: #605e5c;
}
.fit {
    height: 16px;
}
.fit svg {
    display: block;
    fill: none;
    stroke: #605e5c;
    stroke-width: 1.5;
}

/* taskbar */
.taskbar {
    display: grid;
    grid-template-columns: 1fr auto 1fr;
    align-items: center;
    height: 61px;
    background: #202020;
    color: #fff;
}
.weather {
    display: flex;
    align-items: center;
    gap: 9px;
    padding-left: 26px;
}
.apps {
    display: flex;
    align-items: center;
}
.apps button {
    display: flex;
    align-items: center;
    justify-content: center;
    position: relative;
    width: 49px;
    height: 50px;
    margin: 0 3px;
    border-radius: 4px;
}
.apps .search-pill {
    gap: 6px;
    width: 125px;
    height: 40px;
    margin-right: 6px;
    border-radius: 20px;
    background: #2d2d2d;
}
.search-pill svg {
    fill: none;
    stroke: #fff;
    stroke-width: 1.8;
}
/* the badge sticks out to the right of the icon box */
.badged {
    overflow: visible;
}
.apps .running {
    background: #2e2e2e;
}
.running::after, .idle::after {
    content: "";
    position: absolute;
    bottom: 0;
    width: 20px;
    height: 4px;
    border-radius: 2px;
    background: #4cc2ff;
}
.idle::after {
    width: 8px;
    background: #9a9a9a;
}
.tray {
    display: flex;
    align-items: center;
    justify-content: flex-end;
    gap: 10px;
    padding-right: 24px;
}
.lang {
    margin: 0 12px 0 10px;
    text-align: center;
}
.clock {
    margin-left: 10px;
    text-align: right;
    white-space: nowrap;
}
.count {
    width: 20px;
    height: 20px;
    margin-left: 4px;
    border-radius: 50%;
    background: #4cc2ff;
    color: #111;
    font-size: 11px;
    text-align: center;
}
```
